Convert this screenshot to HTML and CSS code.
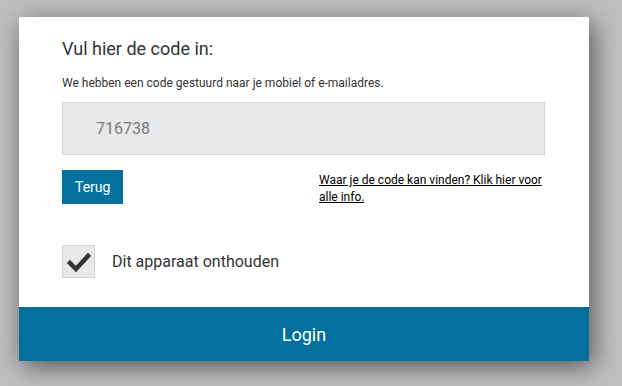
FILE: index.html
```html
<!DOCTYPE html>
<html lang="nl">
<head>
<meta charset="UTF-8">
<meta name="viewport" content="width=device-width, initial-scale=1.0">
<title>Code invoeren</title>
<link rel="stylesheet" href="styles.css">
</head>
<body>
    <div class="card">
        <!-- Code entry -->
        <section class="content">
            <h1 class="title">Vul hier de code in:</h1>
            <p class="intro">We hebben een code gestuurd naar je mobiel of e-mailadres.</p>
            <div class="code-field">716738</div>
            <div class="actions">
                <button class="back-button">Terug</button>
                <a class="help-link" href="#">Waar je de code kan vinden? Klik hier voor alle info.</a>
            </div>
            <label class="remember">
                <span class="checkbox">
                    <svg width="24" height="20" viewBox="0 0 24 20">
                        <path d="M3 11 L9 17 L21 4" fill="none" stroke="#333" stroke-width="4.5" stroke-linecap="square"/>
                    </svg>
                </span>
                <span class="remember-label">Dit apparaat onthouden</span>
            </label>
        </section>
        <button class="login-button">Login</button>
    </div>
</body>
</html>
```

FILE: styles.css
```css
body, html {
    margin: 0;
    height: 100%;
    background-color: #bfbfbf;
    font-family: Roboto, "Liberation Sans", Arial, sans-serif;
    overflow: hidden;
}
body {
    padding: 17px 0 0 19px;
    box-sizing: border-box;
}
.card {
    width: 570px;
    background-color: white;
    box-shadow: 4px 6px 24px rgba(0, 0, 0, 0.55);
    display: flex;
    flex-direction: column;
}
.content {
    padding: 20px 44px 29px 43px;
    display: flex;
    flex-direction: column;
}
.title {
    margin: 0;
    font-size: 18px;
    font-weight: 400;
    color: #333;
    line-height: 24px;
}
.intro {
    margin: 14px 0 0 0;
    font-size: 12px;
    color: #333;
    line-height: 16px;
}
.code-field {
    margin-top: 11px;
    height: 51px;
    border: 1px solid #d3d4d6;
    background-color: #e8e9eb;
    color: #7a7a7a;
    font-size: 16px;
    display: flex;
    align-items: center;
    padding-left: 33px;
}
.actions {
    margin-top: 15px;
    display: flex;
    justify-content: space-between;
    align-items: flex-start;
}
.back-button {
    background-color: #04709d;
    color: white;
    border: none;
    height: 34px;
    padding: 0 13px;
    font-family: inherit;
    font-size: 14px;
    cursor: pointer;
}
.help-link {
    width: 226px;
    margin-top: 2px;
    color: black;
    font-size: 12px;
    line-height: 17px;
    text-decoration: underline;
}
.remember {
    margin-top: 39px;
    display: flex;
    align-items: center;
}
.checkbox {
    width: 31px;
    height: 31px;
    border: 1px solid #d3d4d6;
    background-color: #e8e9eb;
    display: flex;
    align-items: center;
    justify-content: center;
}
.remember-label {
    margin-left: 17px;
    font-size: 16px;
    color: #333;
}
.login-button {
    height: 54px;
    background-color: #04709d;
    color: white;
    border: none;
    font-family: inherit;
    font-size: 18px;
    cursor: pointer;
}
```
